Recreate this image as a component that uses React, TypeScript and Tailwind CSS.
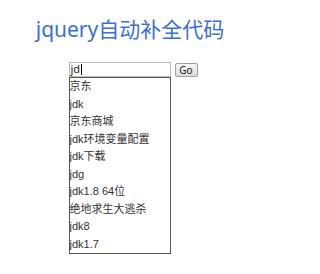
const SUGGESTIONS = [
  "京东",
  "jdk",
  "京东商城",
  "jdk环境变量配置",
  "jdk下载",
  "jdg",
  "jdk1.8 64位",
  "绝地求生大逃杀",
  "jdk8",
  "jdk1.7",
];

export default function App() {
  return (
    <div className="min-h-[274px] w-[268px] bg-white font-['Noto_Sans','Noto_Sans_CJK_SC',sans-serif]">
      <h1 className="pt-[15px] pr-[8px] text-center text-[21px] leading-[28px] font-normal text-[#3a6fd8]">
        jquery自动补全代码
      </h1>
      <div className="mt-[19px] flex justify-center gap-[4px] pr-[2px]">
        <div className="flex w-[102px] flex-col">
          <div className="flex h-[15px] items-center border border-[#bdbdbd] px-[1px] text-[11px] text-[#222]">
            jd
            <span className="ml-[1px] inline-block h-[11px] w-px bg-black" />
          </div>
          <ul className="border border-[#555] font-['Liberation_Sans','Noto_Sans_CJK_SC',sans-serif] text-[11px] text-[#333]">
            {SUGGESTIONS.map((s) => (
              <li key={s} className="h-[17.5px] truncate leading-[17.5px]">
                {s}
              </li>
            ))}
          </ul>
        </div>
        <button
          type="button"
          className="mt-[1px] h-[14px] w-[23px] rounded-[2px] border border-[#a0a0a0] bg-gradient-to-b from-[#f6f6f6] to-[#dcdcdc] text-[10px] leading-[12px] text-[#222]"
        >
          Go
        </button>
      </div>
    </div>
  );
}
